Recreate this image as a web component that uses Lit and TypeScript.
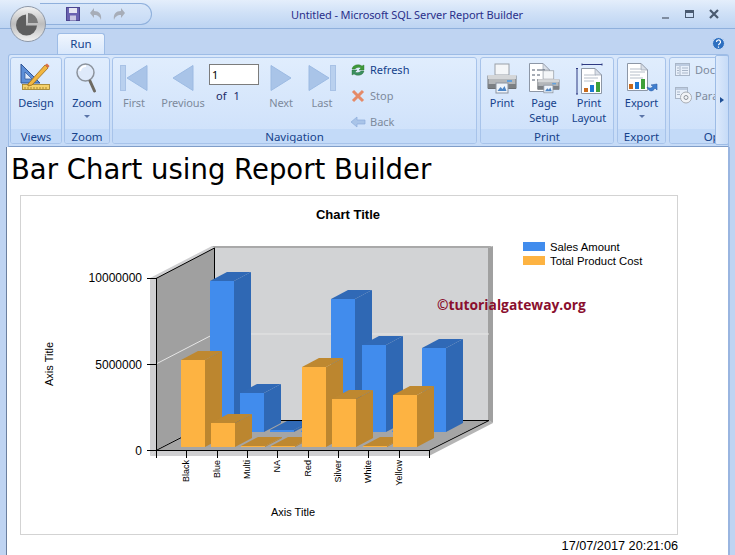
import { LitElement, html, css, svg } from "lit";
import { customElement } from "lit/decorators.js";

const BLUE = ["#418ced", "#2f68b4", "#3069b6"];
const ORG = ["#fdb342", "#bc862f", "#be8830"];
const cats = ["Black", "Blue", "Multi", "NA", "Red", "Silver", "White", "Yellow"];
const orangeX = [181, 211, 241, 271, 302, 332, 363, 393];
const orangeTop = [360, 423, 446, 446, 367, 399, 446, 395];
const blueX = [210, 240, 270, 301, 331, 362, 392, 422];
const blueTop = [281, 393, 430, 431, 299, 345, 431, 348];
const tickX = [186, 217, 247, 277, 308, 338, 368, 399];

function bar(x: number, top: number, bottom: number, c: string[]) {
  const w = 24, dx = 17, dy = 9;
  return svg`
    <polygon points="${x + w},${top} ${x + w + dx},${top - dy} ${x + w + dx},${bottom - dy} ${x + w},${bottom}" fill="${c[1]}"/>
    <polygon points="${x},${top} ${x + dx},${top - dy} ${x + w + dx},${top - dy} ${x + w},${top}" fill="${c[2]}"/>
    <rect x="${x}" y="${top}" width="${w}" height="${bottom - top}" fill="${c[0]}"/>`;
}

const paper = (x: number, y: number, w: number, h: number) => svg`
  <path d="M${x + .5} ${y + .5}H${x + w - 7}L${x + w - .5} ${y + 7}V${y + h - .5}H${x + .5}Z" fill="#fff" stroke="#8d97a6"/>
  <path d="M${x + w - 7} ${y + .5}V${y + 7}H${x + w - .5}Z" fill="#d9dfe8" stroke="#8d97a6" stroke-width=".6"/>`;

const printer = (s = 1) => svg`
  <g transform="scale(${s})">
    <rect x="8" y="1" width="14" height="11" fill="#f4f6f8" stroke="#9aa0a8"/>
    <path d="M1 12.5h28v13H1z" fill="#b4b7ba" stroke="#6c7074"/>
    <rect x="1" y="12" width="28" height="4" fill="#d4d6d8"/>
    <rect x="1" y="21" width="28" height="4" fill="#7c8084"/>
    <rect x="20" y="17" width="5" height="2" fill="#62a0dc"/>
    <rect x="9" y="20" width="12" height="10" fill="#eef4fb" stroke="#8b93a0"/>
    <path d="M10.5 28l3-4 2 2 2-3 2 5z" fill="#4e86c6"/>
  </g>`;

const ICONS = {
  design: svg`<svg class="ic" width="32" height="30" viewBox="0 0 32 30">
    <path d="M1 1L20 20H1Z" fill="#5d8fd8" stroke="#2f5597"/><path d="M5 9l7 7H5Z" fill="#dfeafa" stroke="#2f5597" stroke-width=".7"/>
    <rect x="2.500" y="21.500" width="27" height="5" fill="#f5d16b" stroke="#9c7b22" stroke-width=".8"/>
    <path d="M5 24v2M8 24v2M11 24v2M14 24v2M17 24v2M20 24v2M23 24v2M26 24v2" stroke="#8a6a1a" stroke-width=".7"/>
    <path d="M8 21L25 2l3 3L12 22l-4 1Z" fill="#f2b740" stroke="#9a6a1c" stroke-width=".8"/>
    <path d="M25 2l2-1.500 2.500 2.500-1.500 2Z" fill="#d9704a"/></svg>`,
  zoom: svg`<svg class="ic" width="22" height="30" viewBox="0 0 22 30">
    <circle cx="9.500" cy="9.500" r="8.500" fill="#dfeafa" stroke="#8c939c" stroke-width="1.500"/>
    <path d="M4 8a6 6 0 0 1 6-5" stroke="#fff" stroke-width="2" fill="none"/>
    <path d="M14 18l4.500 10" stroke="#6e6a62" stroke-width="3" stroke-linecap="round"/></svg>`,
  first: svg`<svg class="ic nav" width="28" height="26" viewBox="0 0 28 26">
    <rect x=".5" y=".5" width="5" height="25" fill="#b9d0ee" stroke="#a8c2e6"/><path d="M27 .5V25.500L7 13Z" fill="#a9c4e8" stroke="#9cbae2"/></svg>`,
  prev: svg`<svg class="ic nav" width="22" height="26" viewBox="0 0 22 26"><path d="M21 .5V25.500L1 13Z" fill="#a9c4e8" stroke="#9cbae2"/></svg>`,
  next: svg`<svg class="ic nav" width="22" height="26" viewBox="0 0 22 26"><path d="M1 .5V25.500L21 13Z" fill="#a9c4e8" stroke="#9cbae2"/></svg>`,
  last: svg`<svg class="ic nav" width="28" height="26" viewBox="0 0 28 26">
    <rect x="22.500" y=".5" width="5" height="25" fill="#b9d0ee" stroke="#a8c2e6"/><path d="M1 .5V25.500L21 13Z" fill="#a9c4e8" stroke="#9cbae2"/></svg>`,
  refresh: svg`<svg width="16" height="14" viewBox="0 0 16 14">
    <path d="M2 6a6 5 0 0 1 10-3l2-1v5H9l2-2a4 3 0 0 0-6 1Z" fill="#3f9a3a" stroke="#2a6e2a" stroke-width=".4"/>
    <path d="M14 8a6 5 0 0 1-10 3l-2 1V7h5L5 9a4 3 0 0 0 6-1Z" fill="#3a8f62" stroke="#2a6e2a" stroke-width=".4"/></svg>`,
  stop: svg`<svg width="16" height="14" viewBox="0 0 16 14"><path d="M3 2l10 10M13 2L3 12" stroke="#e58a68" stroke-width="3"/></svg>`,
  back: svg`<svg width="16" height="14" viewBox="0 0 16 14"><path d="M1 7l6-5v3h8v4H7v3Z" fill="#a9c4e8" stroke="#8eaedb" stroke-width=".7"/></svg>`,
  print: svg`<svg class="ic" width="30" height="31" viewBox="0 0 30 31">${printer()}</svg>`,
  setup: svg`<svg class="ic" width="31" height="31" viewBox="0 0 31 31">
    ${paper(0, 0, 21, 29)}
    <path d="M3 7h3M3 12h3M3 17h3M8 7h8M8 12h3M8 17h2" stroke="#4e5a6c" stroke-width="1"/>
    <g transform="translate(8,7) scale(.76)">${printer()}</g></svg>`,
  layout: svg`<svg class="ic" width="28" height="32" viewBox="0 0 28 32">
    <path d="M7 1.500H27M7 .5v2M27 .5v2" stroke="#2e3a82"/>
    <path d="M1 5.500H3M2 5.500V31M1 31H3" stroke="#2e3a82" fill="none"/>
    ${paper(6, 5, 21, 26)}
    <path d="M9 12h12M9 15h14M9 18h10" stroke="#b6bec9"/>
    <rect x="9" y="25" width="4" height="4" fill="#c86a1c"/><rect x="15" y="22" width="4" height="7" fill="#1d78d4"/><rect x="21" y="19" width="4" height="10" fill="#3ea03a"/></svg>`,
  export: svg`<svg class="ic" width="32" height="32" viewBox="0 0 32 32">
    ${paper(1, 0, 21, 28)}
    <path d="M4 6h12M4 9h15M4 12h10M4 15h13" stroke="#b6bec9"/>
    <rect x="3" y="21" width="4" height="5" fill="#c86a1c"/><rect x="9" y="19" width="4" height="7" fill="#1d78d4"/><rect x="15" y="16" width="4" height="10" fill="#3ea03a"/>
    <path d="M21 24c3 2 5 1 6-1l-2-1 6-1 0 6-2-2c-2 4-6 4-8-1Z" fill="#3f7fd0" stroke="#2c5ea8" stroke-width=".6"/></svg>`,
  docmap: svg`<svg width="16" height="14" viewBox="0 0 16 14">
    <rect x=".5" y=".5" width="14" height="12" fill="#e8f0fb" stroke="#a9b6c8"/><rect x="1" y="1" width="13" height="2" fill="#bccbe0"/>
    <path d="M5 3v9M7 5h6M7 7.500h6M7 10h6M2 5h2M2 7.500h2M2 10h2" stroke="#a9b6c8"/></svg>`,
  params: svg`<svg width="18" height="17" viewBox="0 0 18 17">
    <rect x=".5" y=".5" width="12" height="11" fill="#e8f0fb" stroke="#a9b6c8"/><rect x="1" y="1" width="11" height="2" fill="#bccbe0"/>
    <path d="M2 5h3M2 7.500h3" stroke="#a9b6c8"/>
    <circle cx="11" cy="10.500" r="5.500" fill="#f2f4f7" stroke="#a8adb4"/><circle cx="11" cy="10.500" r="2" fill="none" stroke="#8d939b"/></svg>`,
};

@customElement("app-root")
export class AppRoot extends LitElement {
  static styles = css`
    :host { display: block; width: 735px; height: 555px; overflow: hidden; position: relative;
      background: #bfd4f2; font-family: "Noto Sans", "DejaVu Sans", sans-serif; font-size: 11px; color: #15428b; }
    .top { height: 28px; display: flex; align-items: center; border-bottom: 1px solid #8fb0dc;
      background: linear-gradient(#e4eefb, #d0e1f7 45%, #bdd4f2); }
    .qat { margin-left: 40px; width: 112px; height: 22px; box-sizing: border-box; display: flex; align-items: center;
      gap: 9px; padding-left: 26px; border: 1px solid #8fb0dc; border-left: 0; border-radius: 0 12px 12px 0;
      background: linear-gradient(#d9e7f9, #c6daf5); }
    .title { flex: 1; text-align: center; margin-left: 2px; color: #2a2f8a; letter-spacing: -.1px; }
    .win { display: flex; align-items: center; gap: 12px; padding-right: 15px; }
    .orb { position: absolute; left: 10px; top: 5px; }
    .tabs { height: 25px; display: flex; align-items: flex-end; padding-left: 57px; justify-content: space-between; }
    .tab { width: 48px; height: 21px; box-sizing: border-box; text-align: center; line-height: 20px; font-size: 11.5px;
      border: 1px solid #9dbce6; border-bottom: 0; border-radius: 3px 3px 0 0; background: linear-gradient(#f0f6fe, #d8e7fb); }
    .help { margin: 0 10px 4px 0; }
    .ribbon { height: 93px; box-sizing: border-box; margin: 0 6px 0 8px; padding: 2px 1px 2px; display: flex; gap: 2px;
      border: 1px solid #9dbce6; border-radius: 3px 3px 0 0; border-bottom-color: #7f9dc9; overflow: hidden;
      background: linear-gradient(#d8e7fb, #c6dbf7); }
    .group { display: flex; flex-direction: column; flex: none; box-sizing: border-box; overflow: hidden;
      border: 1px solid #a7c3ea; border-radius: 3px; background: linear-gradient(#e0edfd, #cde0fa); }
    .g-views { width: 52px; } .g-zoom { width: 46px; } .g-nav { width: 365px; }
    .g-print { width: 134px; margin-left: 1px; } .g-export { width: 49px; margin-left: 1px; } .g-opts { width: 112px; margin-left: 1px; }
    .body { flex: 1; display: flex; min-height: 0; }
    .cap { height: 14px; line-height: 15px; text-align: center; background: #c3daf8; white-space: nowrap; font-size: 11.5px; }
    .btn { display: flex; flex-direction: column; align-items: center; flex: none; padding-top: 5px; line-height: 15px; text-align: center; letter-spacing: -.1px; }
    .icbox { height: 32px; display: flex; align-items: flex-start; justify-content: center; }
    .ic { display: block; }
    .nav { margin-top: 2px; }
    .caret { width: 0; height: 0; margin-top: 5px; border: 3px solid transparent; border-top: 3px solid #5a74a8; border-bottom: 0; }
    .off { color: #7d8a9c; }
    .w38 { width: 38px; } .w42 { width: 42px; } .w44 { width: 44px; } .w47 { width: 47px; } .w48 { width: 48px; } .w50 { width: 50px; }
    .prev { width: 56px; margin-right: -2px; }
    .pager { width: 50px; flex: none; padding-top: 6px; }
    .pager input { display: block; box-sizing: border-box; width: 50px; height: 21px; padding: 0 2px; border: 1px solid #7c7c7c; background: #fff;
      font: 11px "Noto Sans", sans-serif; color: #000; outline: none; border-radius: 0; }
    .of { display: flex; gap: 7px; padding-left: 7px; margin-top: 3px; color: #1a2a66; line-height: 15px; }
    .mini { display: flex; flex-direction: column; gap: 11px; padding-top: 4px; width: 70px; flex: none; }
    .mini div { display: flex; align-items: center; gap: 4px; height: 15px; white-space: nowrap; }
    .mini svg { flex: none; }
    .m-nav { margin-left: 9px; }
    .m-opts { padding-left: 5px; }
    .mini .pa { gap: 2px; }
    .scroll { position: absolute; left: 715px; top: 55px; width: 14px; height: 90px; box-sizing: border-box; display: flex; align-items: center; justify-content: center;
      border: 1px solid #9dbce6; border-radius: 2px; background: linear-gradient(90deg, #dce9fb, #c6dbf7); }
    .scroll i { width: 0; height: 0; border: 3px solid transparent; border-left: 4px solid #1f4f96; border-right: 0; }
    .page { height: 408px; margin: 0 5px 0 6px; box-sizing: border-box; background: #fff; overflow: hidden; color: #000;
      border-left: 1px solid #6b7f9e; border-right: 2px solid #99b5e0; padding: 0 0 0 4px; position: relative; }
    h1 { margin: 0; padding-top: 5px; font: 400 27.500px/35px "DejaVu Sans", sans-serif; color: #000; white-space: nowrap; }
    .chart { display: block; margin: 8px 0 0 9px; width: 658px; height: 341px; box-sizing: border-box; }
    .date { width: 667px; text-align: right; font: 12.700px/20px "Liberation Sans", sans-serif; color: #000; }
    .t { font-family: "Liberation Sans", sans-serif; fill: #000; }
  `;

  render() {
    return html`
      <div class="top">
        <div class="qat">
          <svg width="14" height="14" viewBox="0 0 14 14"><rect x=".5" y=".5" width="13" height="13" fill="#6a62b0" stroke="#4b4590"/><rect x="3" y="1" width="8" height="5" fill="#e6e6f2"/><rect x="4" y="8.500" width="6" height="5" fill="#c9c6e4"/></svg>
          <svg width="14" height="14" viewBox="0 0 14 14"><path d="M1 6l4-5v3c5 0 8 3 7 9-1-3-3-5-7-5v3Z" fill="#a7adb8"/></svg>
          <svg width="14" height="14" viewBox="0 0 14 14"><path d="M13 6L9 1v3C4 4 1 7 2 13c1-3 3-5 7-5v3Z" fill="#a7adb8"/></svg>
        </div>
        <div class="title">Untitled - Microsoft SQL Server Report Builder</div>
        <div class="win">
          <svg width="12" height="12" viewBox="0 0 12 12"><rect x="2" y="9" width="7" height="2" fill="#7e8ca0"/></svg>
          <svg width="12" height="12" viewBox="0 0 12 12"><rect x="1.500" y="2.500" width="8" height="7" fill="none" stroke="#4a5a70"/><rect x="1" y="2" width="9" height="3" fill="#4a5a70"/></svg>
          <svg width="12" height="12" viewBox="0 0 12 12"><path d="M2 2l8 8M10 2l-8 8" stroke="#4a5a70" stroke-width="2.200"/></svg>
        </div>
      </div>
      <svg class="orb" width="37" height="38" viewBox="0 0 37 38">
        <defs><linearGradient id="o" x1="0" y1="0" x2="0" y2="1"><stop offset="0" stop-color="#f4f4f4"/><stop offset=".5" stop-color="#bdbdbd"/><stop offset="1" stop-color="#f2f2f2"/></linearGradient></defs>
        <circle cx="18" cy="19" r="17.500" fill="url(#o)" stroke="#8d98a8"/>
        <path d="M16 9.500A10.500 10.500 0 1 0 27 20.500H16Z" fill="#5e5e5e"/><path d="M18 8A10.500 10.500 0 0 1 28 18H18Z" fill="#7a7a7a"/>
      </svg>
      <div class="tabs">
        <div class="tab">Run</div>
        <svg class="help" width="13" height="13" viewBox="0 0 13 13"><circle cx="6.500" cy="6.500" r="6" fill="#2d6fc0" stroke="#c5d9f3"/><path d="M4.500 5a2 2 0 1 1 3 1.700c-.7.4-1 .8-1 1.500M6.500 9.500v1.200" stroke="#fff" stroke-width="1.200" fill="none"/></svg>
      </div>
      <div class="ribbon">
        <div class="group g-views">
          <div class="body"><div class="btn w50"><div class="icbox">${ICONS.design}</div><span>Design</span></div></div>
          <div class="cap">Views</div>
        </div>
        <div class="group g-zoom">
          <div class="body"><div class="btn w44"><div class="icbox">${ICONS.zoom}</div><span>Zoom</span><i class="caret"></i></div></div>
          <div class="cap">Zoom</div>
        </div>
        <div class="group g-nav">
          <div class="body">
            <div class="btn off w42"><div class="icbox">${ICONS.first}</div><span>First</span></div>
            <div class="btn off prev"><div class="icbox">${ICONS.prev}</div><span>Previous</span></div>
            <div class="pager"><input value="1" /><div class="of"><span>of</span><span>1</span></div></div>
            <div class="btn off w44"><div class="icbox">${ICONS.next}</div><span>Next</span></div>
            <div class="btn off w38"><div class="icbox">${ICONS.last}</div><span>Last</span></div>
            <div class="mini m-nav">
              <div>${ICONS.refresh}<span>Refresh</span></div>
              <div class="off">${ICONS.stop}<span>Stop</span></div>
              <div class="off">${ICONS.back}<span>Back</span></div>
            </div>
          </div>
          <div class="cap">Navigation</div>
        </div>
        <div class="group g-print">
          <div class="body">
            <div class="btn w42"><div class="icbox">${ICONS.print}</div><span>Print</span></div>
            <div class="btn w42"><div class="icbox">${ICONS.setup}</div><span>Page<br />Setup</span></div>
            <div class="btn w48"><div class="icbox">${ICONS.layout}</div><span>Print<br />Layout</span></div>
          </div>
          <div class="cap">Print</div>
        </div>
        <div class="group g-export">
          <div class="body"><div class="btn w47"><div class="icbox">${ICONS.export}</div><span>Export</span><i class="caret"></i></div></div>
          <div class="cap">Export</div>
        </div>
        <div class="group g-opts">
          <div class="body">
            <div class="mini off m-opts">
              <div>${ICONS.docmap}<span>Document Map</span></div>
              <div class="pa">${ICONS.params}<span>Parameters</span></div>
            </div>
          </div>
          <div class="cap">Options</div>
        </div>
      </div>
      <div class="scroll"><i></i></div>
      <div class="page">
        <h1>Bar Chart using Report Builder</h1>
        <svg class="chart" viewBox="20 195 658 341" width="658" height="341">
          <rect x="20.500" y="195.500" width="657" height="339" fill="#fff" stroke="#d3d3d3"/>
          <text class="t" x="348" y="219" text-anchor="middle" font-size="13" font-weight="700">Chart Title</text>

          <polygon points="150,278 212,246 214,248 156,278 156,450 150,456" fill="#cfcfd1"/>
          <polygon points="212,246 492,246 489,248 214,248" fill="#a9a9a9"/>
          <polygon points="488,248 493,246 493,423 488,420" fill="#a0a0a0"/>
          <polygon points="150,456 429,456 429,450 156,450" fill="#cfcfd1"/>
          <polygon points="429,456 493,423 489,420 429,450" fill="#b5b5b5"/>
          <polygon points="156,278 214,248 214,420 156,450" fill="#a0a0a0"/>
          <polygon points="214,248 488,248 488,420 214,420" fill="#d2d3d5"/>
          <polygon points="156,450 214,420 489,420 429,450" fill="#a5a5a5"/>
          <path d="M156 364L214 334H489" stroke="#e6e6e6" fill="none"/>
          <path d="M214.500 248V420.500H489M156 278.500L214.500 248M156 450.500L214.500 420.500M429 450.500L489 420.500" stroke="#000" fill="none"/>
          ${blueX.map((x, i) => bar(x, blueTop[i], 432, BLUE))}
          ${orangeX.map((x, i) => bar(x, orangeTop[i], 447, ORG))}
          <path d="M156.500 278V458M156 450.500H429.500" stroke="#000" fill="none"/>
          <path d="M147 278.500H156M147 364.500H156M147 450.500H156M429.500 450V458" stroke="#000"/>
          ${tickX.map((x) => svg`<path d="M${x + .5} 450V458" stroke="#000"/>`)}

          <text class="t" x="142" y="282" text-anchor="end" font-size="12">10000000</text>
          <text class="t" x="142" y="369" text-anchor="end" font-size="12">5000000</text>
          <text class="t" x="142" y="455" text-anchor="end" font-size="12">0</text>
          ${cats.map((c, i) => svg`<text class="t" font-size="9" text-anchor="end" transform="translate(${tickX[i] + 3} 460) rotate(-90)">${c}</text>`)}
          <text class="t" font-size="11" text-anchor="middle" transform="translate(53 364) rotate(-90)">Axis Title</text>
          <text class="t" x="293" y="516" font-size="11" text-anchor="middle">Axis Title</text>

          <rect x="523" y="242" width="22" height="9" fill="#418ced"/>
          <rect x="523" y="256" width="22" height="9" fill="#fdb342"/>
          <text class="t" x="550" y="251" font-size="11.300">Sales Amount</text>
          <text class="t" x="550" y="265" font-size="11.300">Total Product Cost</text>
          <text x="437" y="310" font-family="'Open Sans', sans-serif" font-weight="700" font-size="13.800" fill="#8a0f2e">©tutorialgateway.org</text>
        </svg>
        <div class="date">17/07/2017 20:21:06</div>
      </div>
    `;
  }
}
